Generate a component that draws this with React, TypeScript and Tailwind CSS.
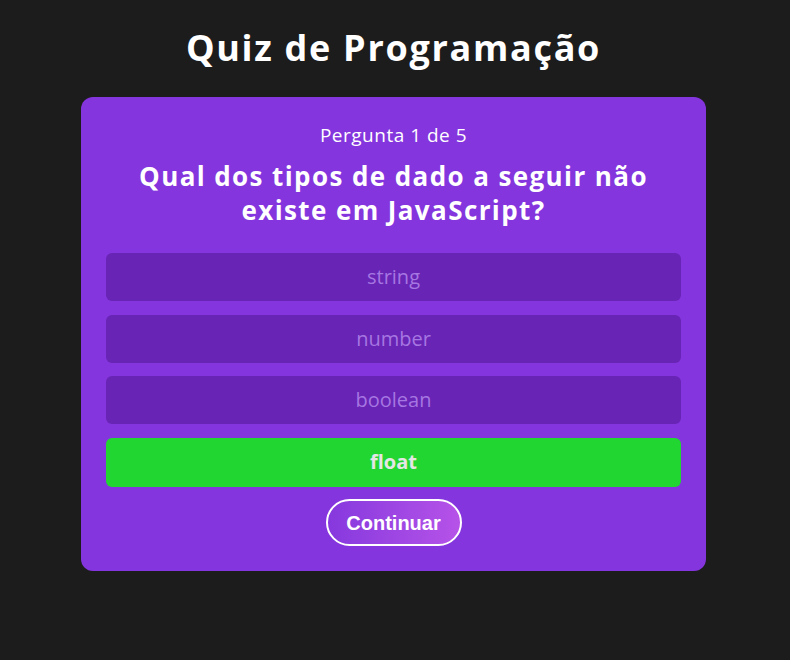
import React from 'react';

const OPTIONS = ['string', 'number', 'boolean'];

export default function App() {
  return (
    <div className="min-h-screen bg-[#1c1c1c] pr-[3px] pt-[22px] font-['Open_Sans',sans-serif] text-white">
      <h1 className="text-center text-[36px] font-bold leading-[52px] tracking-[1.7px]">Quiz de Programação</h1>

      <div className="mx-auto mt-[23px] w-[625px] rounded-xl bg-[#8435dd] px-[25px] pb-[25px] pt-[24px]">
        <p className="text-center text-[19px] leading-[28px] tracking-[0.5px]">Pergunta 1 de 5</p>
        <h2 className="mt-[10px] text-center text-[26px] font-bold leading-[34px] tracking-[1.4px]">
          Qual dos tipos de dado a seguir não existe em JavaScript?
        </h2>

        <div className="mt-[26px] flex flex-col gap-[13.5px]">
          {OPTIONS.map((o) => (
            <div
              key={o}
              className="flex h-[48px] items-center justify-center rounded-md bg-[#6824b4] text-[20px] text-[#a676e2]"
            >
              {o}
            </div>
          ))}
          <div className="flex h-[49px] items-center justify-center rounded-md bg-[#22d632] text-[20px] font-bold text-[#e6e6e6]">
            float
          </div>
        </div>

        <div className="mt-[12.5px] flex justify-center">
          <button
            type="button"
            className="h-[47px] w-[136px] rounded-full border-2 border-white bg-gradient-to-r from-[#8638de] to-[#b652e8] font-['Liberation_Sans',sans-serif] text-[20px] font-bold text-white"
          >
            Continuar
          </button>
        </div>
      </div>
    </div>
  );
}
